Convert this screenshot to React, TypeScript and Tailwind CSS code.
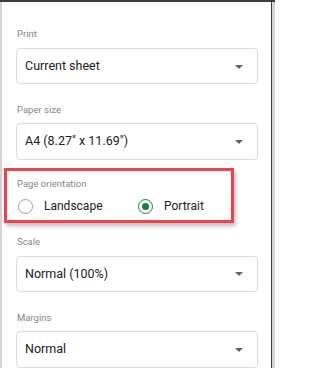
import React from 'react'

const font = { fontFamily: 'Roboto, "Liberation Sans", Arial, sans-serif' }

function Label({ children }: { children: React.ReactNode }) {
  return <div className="text-[9.5px] leading-[14px] text-[#80868b] pl-[17px]">{children}</div>
}

function Select({ value }: { value: string }) {
  return (
    <div className="ml-[16px] w-[242px] h-[38px] border border-[#dadce0] rounded-[4px] flex items-center justify-between pl-[8px] pr-[14px]">
      <span className="text-[12.5px] text-[#202124]">{value}</span>
      <svg width="8" height="4" viewBox="0 0 8 4" className="mt-[1px]">
        <path d="M0 0h8L4 4z" fill="#5f6368" />
      </svg>
    </div>
  )
}

function Radio({ checked, label }: { checked?: boolean; label: string }) {
  return (
    <div className="flex items-center">
      <div
        className={`w-[15px] h-[15px] rounded-full border-[1.5px] flex items-center justify-center ${
          checked ? 'border-[#188038]' : 'border-[#9aa0a6]'
        }`}
      >
        {checked && <div className="w-[7px] h-[7px] rounded-full bg-[#188038]" />}
      </div>
      <span className="ml-[11px] text-[12px] text-[#202124]">{label}</span>
    </div>
  )
}

export default function App() {
  return (
    <div className="w-[275px] h-[368px] overflow-hidden bg-white flex border-t-2 border-[#3c3c3c]" style={font}>
      <div className="w-[2px] bg-[#d4d4d4] shrink-0" />
      <div className="flex-1 flex flex-col pt-[25px] -ml-[2px]">
        <Label>Print</Label>
        <div className="h-[7px]" />
        <Select value="Current sheet" />
        <div className="h-[19px]" />
        <Label>Paper size</Label>
        <div className="h-[7px]" />
        <Select value='A4 (8.27" x 11.69")' />

        {/* highlighted orientation block */}
        <div className="mt-[8px] ml-[4px] w-[230px] h-[57px] border-[3px] border-[#ef4349] shadow-[2px_3px_4px_rgba(0,0,0,0.25)] pt-[6px] -mr-px">
          <div className="-ml-[7px]">
            <Label>Page orientation</Label>
          </div>
          <div className="flex items-center h-[20px] mt-[5px] pl-[11px]">
            <div className="w-[120px]">
              <Radio label="Landscape" />
            </div>
            <Radio checked label="Portrait" />
          </div>
        </div>

        <div className="h-[12px]" />
        <Label>Scale</Label>
        <div className="h-[7px]" />
        <Select value="Normal (100%)" />
        <div className="h-[19px]" />
        <Label>Margins</Label>
        <div className="h-[7px]" />
        <Select value="Normal" />
      </div>
      <div className="w-px bg-[#3c3c3c] shrink-0" />
      <div className="w-[3px] bg-[#d4d4d4] shrink-0" />
    </div>
  )
}
